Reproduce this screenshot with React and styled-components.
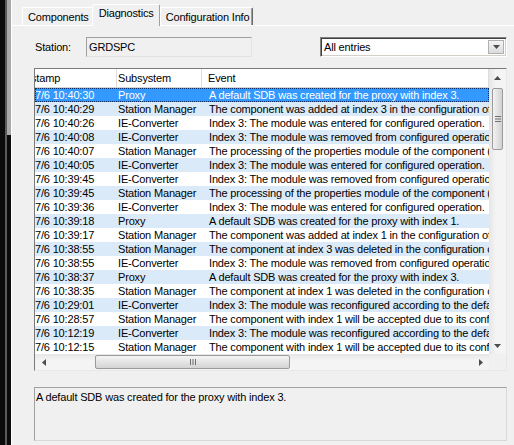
import React from "react";
import styled, { createGlobalStyle } from "styled-components";

const Global = createGlobalStyle`
  html, body { margin: 0; padding: 0; background: #f0f0f0; }
  body { font-family: "Liberation Sans", Arial, sans-serif; font-size: 11px; letter-spacing: -0.17px; color: #000; }
  * { box-sizing: border-box; }
`;

const Window = styled.div`
  width: 514px;
  height: 445px;
  display: flex;
  overflow: hidden;
  background: #f0f0f0;
`;

const LeftEdge = styled.div`
  display: flex;
  width: 12px;
  flex: none;
`;

const Stripe = styled.div`
  width: ${(p) => p.$w}px;
  background: ${(p) => p.$bg};
`;

const Main = styled.div`
  flex: 1;
  display: flex;
  flex-direction: column;
  min-width: 0;
`;

const TabStrip = styled.div`
  height: 26px;
  display: flex;
  align-items: flex-end;
  padding-left: 10px;
  border-bottom: 1px solid #ffffff;
`;

const Tab = styled.div`
  height: ${(p) => (p.$active ? 22 : 18)}px;
  margin-bottom: ${(p) => (p.$active ? -1 : 0)}px;
  padding: ${(p) => (p.$active ? "2px 5px 0 6px" : "3px 3px 0 5px")};
  background: #f0f0f0;
  border-top: 1px solid #ffffff;
  border-left: 1px solid #ffffff;
  border-right: 1px solid ${(p) => (p.$last ? "#696969" : "#a0a0a0")};
  box-shadow: ${(p) => (p.$last ? "inset -1px 0 #a0a0a0" : "none")};
  border-radius: 2px 2px 0 0;
  white-space: nowrap;
  line-height: 13px;
  position: relative;
  z-index: ${(p) => (p.$active ? 1 : 0)};
  margin-left: ${(p) => (p.$active ? -1 : 0)}px;
`;

const Page = styled.div`
  flex: 1;
  display: flex;
  flex-direction: column;
  padding: 11px 7px 0 22px;
`;

const TopRow = styled.div`
  display: flex;
  align-items: center;
  justify-content: space-between;
  height: 20px;
`;

const StationGroup = styled.div`
  display: flex;
  align-items: center;
`;

const Label = styled.span`
  width: 52px;
  padding-left: 1px;
`;

const ReadOnlyBox = styled.div`
  width: 166px;
  height: 20px;
  background: #f0f0f0;
  border-top: 1px solid #a0a0a0;
  border-left: 1px solid #a0a0a0;
  border-right: 1px solid #e3e3e3;
  border-bottom: 1px solid #e3e3e3;
  padding: 3px 2px 0 2px;
  line-height: 13px;
`;

const Combo = styled.div`
  width: 187px;
  height: 20px;
  display: flex;
  align-items: stretch;
  background: #fff;
  border-top: 1px solid #808080;
  border-left: 1px solid #808080;
  border-right: 1px solid #ffffff;
  border-bottom: 1px solid #ffffff;
  box-shadow: inset 1px 1px #404040, inset -1px -1px #d4d0c8;
`;

const ComboText = styled.div`
  flex: 1;
  padding: 3px 0 0 3px;
  line-height: 13px;
`;

const ComboButton = styled.div`
  width: 16px;
  margin: 2px 2px 2px 0;
  background: linear-gradient(#f4f4f4, #dcdcdc);
  border: 1px solid #b0b0b0;
  display: flex;
  align-items: center;
  justify-content: center;
`;

const List = styled.div`
  margin-top: 11px;
  height: 303px;
  display: grid;
  grid-template-columns: 1fr 17px;
  grid-template-rows: 1fr 16px;
  background: #fff;
  border-top: 1px solid #7a7a7a;
  border-left: 1px solid #7a7a7a;
  border-right: 1px solid #e8e8e8;
  border-bottom: 1px solid #e8e8e8;
  overflow: hidden;
`;

const Viewport = styled.div`
  overflow: hidden;
  min-width: 0;
`;

const HeaderRow = styled.div`
  display: grid;
  grid-template-columns: 82px 85px 1fr;
  height: 19px;
  border-bottom: 1px solid #d5d5d5;
  background: #fff;
`;

const HeaderCell = styled.div`
  padding: 3px 0 0 ${(p) => p.$pad}px;
  border-right: 1px solid #dcdcdc;
  white-space: nowrap;
  overflow: hidden;
  line-height: 13px;
  text-indent: ${(p) => p.$indent || 0}px;
`;

const Row = styled.div`
  display: grid;
  grid-template-columns: 82px 85px 1fr;
  height: 14px;
  line-height: 14px;
  background: ${(p) => (p.$selected ? "#3399ff" : p.$alt ? "#dbeaf9" : "#ffffff")};
  color: ${(p) => (p.$selected ? "#ffffff" : "#000000")};
  outline: ${(p) => (p.$selected ? "1px dotted #0a2b66" : "none")};
  outline-offset: -1px;
`;

const Cell = styled.div`
  padding-left: ${(p) => p.$pad}px;
  white-space: nowrap;
  overflow: hidden;
`;

const VScroll = styled.div`
  grid-row: 1 / 2;
  grid-column: 2 / 3;
  background: linear-gradient(to right, #e6e6e6, #f4f4f4 40%, #f4f4f4);
  display: flex;
  flex-direction: column;
  align-items: center;
`;

const ArrowBox = styled.div`
  width: 17px;
  height: ${(p) => p.$h || 17}px;
  display: flex;
  align-items: center;
  justify-content: center;
  flex: none;
`;

const VThumb = styled.div`
  width: 11px;
  height: 62px;
  margin-top: 2px;
  border: 1px solid #9a9a9a;
  border-radius: 2px;
  background: linear-gradient(to right, #f2f2f2, #e2e2e2 50%, #d2d2d2);
  display: flex;
  align-items: center;
  justify-content: center;
  flex: none;
`;

const Spacer = styled.div`
  flex: 1;
`;

const HScroll = styled.div`
  grid-row: 2 / 3;
  grid-column: 1 / 2;
  background: linear-gradient(#e6e6e6, #f4f4f4 40%, #f4f4f4);
  display: flex;
  align-items: center;
`;

const HThumb = styled.div`
  width: 195px;
  height: 14px;
  margin-left: 43px;
  border: 1px solid #9a9a9a;
  border-radius: 2px;
  background: linear-gradient(#f4f4f4, #e4e4e4 50%, #d4d4d4);
  display: flex;
  align-items: center;
  justify-content: center;
  flex: none;
`;

const Corner = styled.div`
  grid-row: 2 / 3;
  grid-column: 2 / 3;
  background: #f0f0f0;
`;

const Description = styled.div`
  margin-top: 16px;
  height: 54px;
  background: #f0f0f0;
  border: 1px solid #a0a0a0;
  border-right-color: #d8d8d8;
  border-bottom-color: #d8d8d8;
  padding: 2px 0 0 1px;
  line-height: 14px;
`;

const Tri = ({ dir }) => {
  const pts = {
    up: "0,4 7,4 3.5,0",
    down: "0,0 7,0 3.5,4",
    left: "4,0 4,7 0,3.5",
    right: "0,0 0,7 4,3.5",
  }[dir];
  const vertical = dir === "up" || dir === "down";
  return (
    <svg width={vertical ? 7 : 4} height={vertical ? 4 : 7} viewBox={vertical ? "0 0 7 4" : "0 0 4 7"}>
      <polygon points={pts} fill="#4d4d4d" />
    </svg>
  );
};

const GripV = () => (
  <svg width="6" height="6" viewBox="0 0 6 6">
    <rect x="0" y="0" width="6" height="1" fill="#6f6f6f" />
    <rect x="0" y="2.5" width="6" height="1" fill="#6f6f6f" />
    <rect x="0" y="5" width="6" height="1" fill="#6f6f6f" />
  </svg>
);

const GripH = () => (
  <svg width="6" height="6" viewBox="0 0 6 6">
    <rect x="0" y="0" width="1" height="6" fill="#6f6f6f" />
    <rect x="2.5" y="0" width="1" height="6" fill="#6f6f6f" />
    <rect x="5" y="0" width="1" height="6" fill="#6f6f6f" />
  </svg>
);

const SDB3 = "A default SDB was created for the proxy with index 3.";
const SDB1 = "A default SDB was created for the proxy with index 1.";
const ENT = "Index 3: The module was entered for configured operation.";
const REM = "Index 3: The module was removed from configured operation.";
const PROC = "The processing of the properties module of the component (index 3) was completed.";
const RECONF = "Index 3: The module was reconfigured according to the default settings.";
const ACC = "The component with index 1 will be accepted due to its configuration.";

const rows = [
  ["7/6 10:40:30", "Proxy", SDB3],
  ["7/6 10:40:29", "Station Manager", "The component was added at index 3 in the configuration of the station."],
  ["7/6 10:40:26", "IE-Converter", ENT],
  ["7/6 10:40:08", "IE-Converter", REM],
  ["7/6 10:40:07", "Station Manager", PROC],
  ["7/6 10:40:05", "IE-Converter", ENT],
  ["7/6 10:39:45", "IE-Converter", REM],
  ["7/6 10:39:45", "Station Manager", PROC],
  ["7/6 10:39:36", "IE-Converter", ENT],
  ["7/6 10:39:18", "Proxy", SDB1],
  ["7/6 10:39:17", "Station Manager", "The component was added at index 1 in the configuration of the station."],
  ["7/6 10:38:55", "Station Manager", "The component at index 3 was deleted in the configuration of the station."],
  ["7/6 10:38:55", "IE-Converter", REM],
  ["7/6 10:38:37", "Proxy", SDB3],
  ["7/6 10:38:35", "Station Manager", "The component at index 1 was deleted in the configuration of the station."],
  ["7/6 10:29:01", "IE-Converter", RECONF],
  ["7/6 10:28:57", "Station Manager", ACC],
  ["7/6 10:12:19", "IE-Converter", RECONF],
  ["7/6 10:12:15", "Station Manager", ACC],
];

export default function App() {
  return (
    <>
      <Global />
      <Window>
        <LeftEdge>
          <Stripe $w={5} $bg="#0b0b0b" />
          <Stripe $w={2} $bg="#5a5a5a" />
          <Stripe $w={4} $bg="linear-gradient(#a9a9a9 0, #a9a9a9 135px, #0b0b0b 135px)" />
          <Stripe $w={1} $bg="#ffffff" />
        </LeftEdge>
        <Main>
          <TabStrip>
            <Tab>Components</Tab>
            <Tab $active>Diagnostics</Tab>
            <Tab $last>Configuration Info</Tab>
          </TabStrip>
          <Page>
            <TopRow>
              <StationGroup>
                <Label>Station:</Label>
                <ReadOnlyBox>GRDSPC</ReadOnlyBox>
              </StationGroup>
              <Combo>
                <ComboText>All entries</ComboText>
                <ComboButton>
                  <Tri dir="down" />
                </ComboButton>
              </Combo>
            </TopRow>
            <List>
              <Viewport>
                <HeaderRow>
                  <HeaderCell $pad={0} $indent={-4}>stamp</HeaderCell>
                  <HeaderCell $pad={1}>Subsystem</HeaderCell>
                  <HeaderCell $pad={6}>Event</HeaderCell>
                </HeaderRow>
                {rows.map((r, i) => (
                  <Row key={i} $selected={i === 0} $alt={i % 2 === 1}>
                    <Cell $pad={0}>{r[0]}</Cell>
                    <Cell $pad={1}>{r[1]}</Cell>
                    <Cell $pad={7}>{r[2]}</Cell>
                  </Row>
                ))}
              </Viewport>
              <VScroll>
                <ArrowBox>
                  <Tri dir="up" />
                </ArrowBox>
                <VThumb>
                  <GripV />
                </VThumb>
                <Spacer />
                <ArrowBox>
                  <Tri dir="down" />
                </ArrowBox>
              </VScroll>
              <HScroll>
                <ArrowBox $h={16}>
                  <Tri dir="left" />
                </ArrowBox>
                <HThumb>
                  <GripH />
                </HThumb>
                <Spacer />
                <ArrowBox $h={16}>
                  <Tri dir="right" />
                </ArrowBox>
              </HScroll>
              <Corner />
            </List>
            <Description>{SDB3}</Description>
          </Page>
        </Main>
      </Window>
    </>
  );
}
